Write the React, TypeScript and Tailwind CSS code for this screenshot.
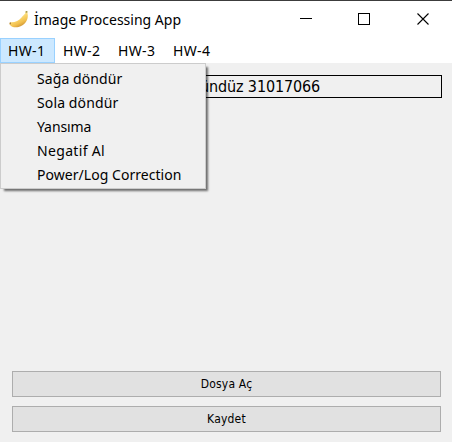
const menus = ['HW-1', 'HW-2', 'HW-3', 'HW-4'];

const items = [
  { label: 'Sağa döndür', tracking: 'tracking-[0.08px]' },
  { label: 'Sola döndür', tracking: 'tracking-[0.12px]' },
  { label: 'Yansıma', tracking: 'tracking-[-0.1px]' },
  { label: 'Negatif Al', tracking: 'tracking-[0.33px]' },
  { label: 'Power/Log Correction', tracking: 'tracking-[0.04px]' },
];

function Banana() {
  return (
    <svg className="h-5 w-5 shrink-0" viewBox="0 0 20 20">
      <defs>
        <linearGradient id="peel" x1="0.3" y1="0.2" x2="0.75" y2="1">
          <stop offset="0.3" stopColor="#fbdc78" />
          <stop offset="0.65" stopColor="#f2c04e" />
          <stop offset="1" stopColor="#c0842c" />
        </linearGradient>
      </defs>
      <path
        d="M16.800 1 L18.300 1 C18.200 2.600 18.600 3.600 18.800 5 C19.200 10.500 15.500 15.700 9.500 17 C6 17.700 2 17 0.700 14.400 C0.200 13.200 0.800 12.300 1.800 12.200 C6.500 12.300 10 10.800 12.500 7.500 C14 5.500 15.200 4.500 16.400 3.200 Z"
        fill="url(#peel)"
      />
      <path d="M16.800 1 L18.300 1 L18.300 2.800 L16.500 2.800 Z" fill="#a39a55" />
      <path d="M0.500 12.800 L1.800 12.300 L2 14 L0.800 14.400 Z" fill="#a87b3c" />
    </svg>
  );
}

export default function App() {
  return (
    <div className="relative flex h-[442px] w-[452px] flex-col overflow-hidden bg-[#f0f0f0] font-['Noto_Sans',sans-serif] text-[14px] text-black">
      <header className="flex h-[38px] shrink-0 items-center border-t border-[#3c3c3c] bg-white pl-[9px]">
        <Banana />
        <h1 className="ml-[5px] leading-5 whitespace-nowrap">İmage Processing App</h1>
        <div className="ml-auto flex items-center">
          <svg className="mr-[23px] h-[13px] w-[129px]" viewBox="0 0 129 13" fill="none" stroke="#000" shapeRendering="crispEdges">
            <path d="M0 5.500H12" />
            <rect x="58.500" y="0.500" width="11" height="11" />
            <path d="M117.500 0.500L128.500 11.500M128.500 0.500L117.500 11.500" shapeRendering="auto" strokeWidth="1.100" />
          </svg>
        </div>
      </header>

      <nav className="flex h-[25px] shrink-0 bg-white">
        {menus.map((menu, i) => (
          <button
            key={menu}
            className={`flex h-[25px] w-[55px] items-center border pl-[7px] tracking-[0.35px] ${
              i === 0 ? 'border-[#99d1ff] bg-[#cce8ff]' : 'border-transparent'
            }`}
          >
            {menu}
          </button>
        ))}
      </nav>

      <main className="flex flex-1 flex-col px-[11px] pt-3 pb-[10px]">
        <div className="ml-px mr-[-1px] flex h-[23px] items-center justify-end border border-black pr-[121px] font-['DejaVu_Sans_Condensed','DejaVu_Sans',sans-serif] text-[16px] tracking-[-0.14px] whitespace-nowrap">
          Gündüz 31017066
        </div>
        <div className="mt-auto ml-px flex flex-col gap-[9px] font-['DejaVu_Sans_Condensed','DejaVu_Sans',sans-serif] text-[12px] tracking-[0.2px]">
          <button className="h-[26px] border border-[#adadad] bg-[#e1e1e1] pb-px leading-4">Dosya Aç</button>
          <button className="h-[26px] border border-[#adadad] bg-[#e1e1e1] leading-4">Kaydet</button>
        </div>
      </main>

      <ul className="absolute top-[63px] left-0 h-[126px] w-[206px] border border-[#ccc] bg-[#f0f0f0] pt-[2px] shadow-[3px_3px_2px_-1px_rgba(0,0,0,0.55)]">
        {items.map((item) => (
          <li key={item.label} className={`flex h-6 items-center pl-9 whitespace-nowrap ${item.tracking}`}>
            {item.label}
          </li>
        ))}
      </ul>
    </div>
  );
}
